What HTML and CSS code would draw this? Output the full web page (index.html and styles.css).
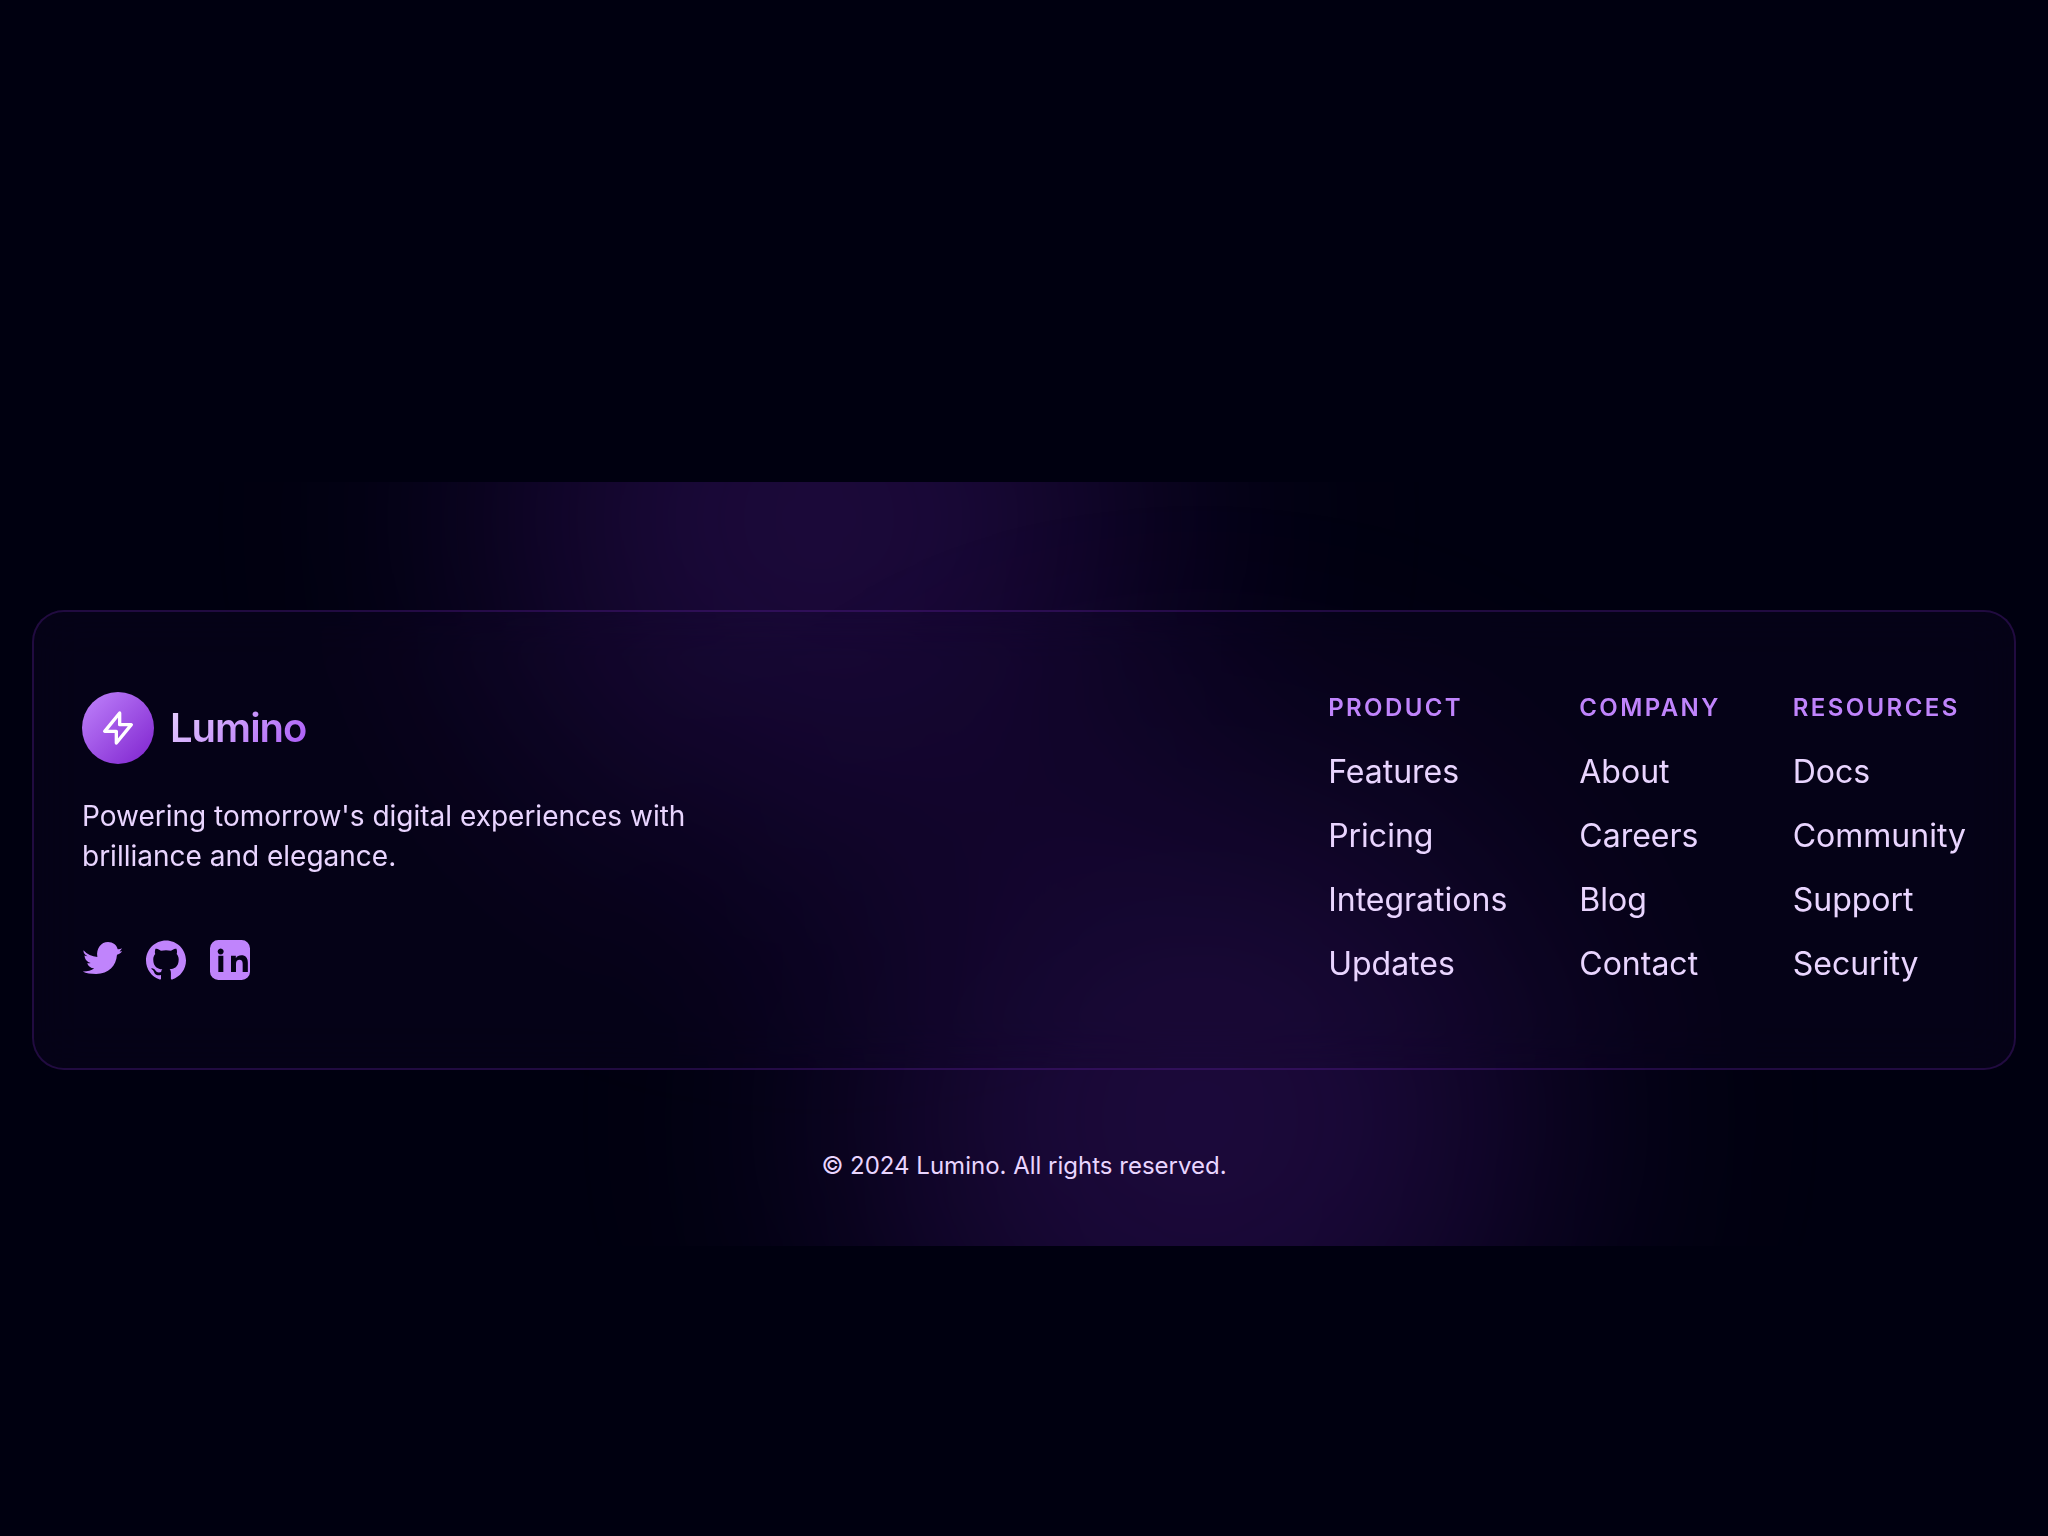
FILE: index.html
```html
<!DOCTYPE html>
<html lang="en">
<head>
<meta charset="utf-8">
<meta name="viewport" content="width=device-width, initial-scale=1">
<title>Lumino</title>
<link rel="stylesheet" href="styles.css">
</head>
<body>
<footer class="footer">
  <div class="glow glow-top"></div>
  <div class="glow glow-bottom"></div>
  <div class="card">
    <div class="brand">
      <div class="logo">
        <span class="logo-mark">
          <svg viewBox="0 0 24 24" width="40" height="40" fill="none" stroke="currentColor" stroke-width="2" stroke-linecap="round" stroke-linejoin="round" aria-hidden="true"><path d="M13 10V3L4 14h7v7l9-11h-7z"/></svg>
        </span>
        <span class="logo-name">Lumino</span>
      </div>
      <p class="tagline">Powering tomorrow's digital experiences with brilliance and elegance.</p>
      <div class="social">
        <a href="#" aria-label="Twitter"><svg viewBox="0 0 24 24" width="40" height="40" fill="currentColor"><path d="M.9 6.200C3 8.600 6 10 9.200 10.200 8.400 5 11.500 1.200 15.600 1.200 18.500 1.200 20.900 3 21.400 5.500 22.300 5.600 23.100 5.400 23.900 5 23.600 5.900 23 6.400 22.500 6.800 23 6.900 23.500 6.800 24 6.600 23.500 7.900 22 8.600 21 8.900 20.500 15.500 16 20.400 8.500 20.400 5.300 20.400 2.500 20 .4 18.900 3 19 5.600 18.400 7.300 17 5.200 16.800 3.700 15.700 3.100 13.900 3.800 14 4.500 14 5.200 13.800 3 13.200 1.600 11.400 1.500 9.300 2.100 9.600 2.800 9.800 3.400 9.800 1.500 8.800 .7 7.600 .9 6.200Z"/></svg></a>
        <a href="#" aria-label="GitHub"><svg viewBox="0 0 24 24" width="40" height="40" fill="currentColor"><path d="M12 .297c-6.63 0-12 5.373-12 12 0 5.303 3.438 9.8 8.205 11.385.6.113.82-.258.82-.577 0-.285-.01-1.04-.015-2.04-3.338.724-4.042-1.61-4.042-1.61C4.422 18.07 3.633 17.7 3.633 17.7c-1.087-.744.084-.729.084-.729 1.205.084 1.838 1.236 1.838 1.236 1.07 1.835 2.809 1.305 3.495.998.108-.776.417-1.305.76-1.605-2.665-.3-5.466-1.332-5.466-5.93 0-1.31.465-2.38 1.235-3.22-.135-.303-.54-1.523.105-3.176 0 0 1.005-.322 3.3 1.23.96-.267 1.98-.399 3-.405 1.02.006 2.04.138 3 .405 2.28-1.552 3.285-1.23 3.285-1.23.645 1.653.24 2.873.12 3.176.765.84 1.23 1.91 1.23 3.22 0 4.61-2.805 5.625-5.475 5.92.42.36.81 1.096.81 2.22 0 1.606-.015 2.896-.015 3.286 0 .315.21.69.825.57C20.565 22.092 24 17.592 24 12.297c0-6.627-5.373-12-12-12"/></svg></a>
        <a href="#" aria-label="LinkedIn"><svg viewBox="0 0 24 24" width="40" height="40" fill="currentColor" fill-rule="evenodd"><path d="M5 0h14a5 5 0 0 1 5 5v14a5 5 0 0 1-5 5H5a5 5 0 0 1-5-5V5a5 5 0 0 1 5-5zM5 9.500v9.700h3V9.500zM6.400 5.100a1.800 1.800 0 1 0 .01 0zM12.600 19.200V9.500h2.900v1.400c.7-1.100 1.900-1.700 3.300-1.700 2.600 0 3.900 1.600 3.900 4.500v5.500h-3.100v-5c0-1.500-.6-2.300-1.900-2.300s-2.100.8-2.100 2.300v5z"/></svg></a>
      </div>
    </div>
    <nav class="links" aria-label="Footer">
      <section>
        <h2>Product</h2>
        <ul><li><a href="#">Features</a></li><li><a href="#">Pricing</a></li><li><a href="#">Integrations</a></li><li><a href="#">Updates</a></li></ul>
      </section>
      <section>
        <h2>Company</h2>
        <ul><li><a href="#">About</a></li><li><a href="#">Careers</a></li><li><a href="#">Blog</a></li><li><a href="#">Contact</a></li></ul>
      </section>
      <section>
        <h2>Resources</h2>
        <ul><li><a href="#">Docs</a></li><li><a href="#">Community</a></li><li><a href="#">Support</a></li><li><a href="#">Security</a></li></ul>
      </section>
    </nav>
  </div>
  <p class="copyright">© 2024 Lumino. All rights reserved.</p>
</footer>
</body>
</html>
```

FILE: styles.css
```css
* {
  box-sizing: border-box;
}

body {
  margin: 0;
  min-height: 100vh;
  padding-top: 192px;
  display: flex;
  flex-direction: column;
  justify-content: center;
  background: #000010;
  color: #e9d5ff;
  font-family: Inter, "Liberation Sans", sans-serif;
}

h2, p, ul {
  margin: 0;
  padding: 0;
}

ul {
  list-style: none;
}

a {
  color: inherit;
  text-decoration: none;
}

svg {
  display: block;
}

.footer {
  position: relative;
  overflow: hidden;
  padding: 128px 32px 64px;
}

.glow {
  position: absolute;
  border-radius: 50%;
  background: rgba(130, 42, 220, 0.21);
  filter: blur(140px);
}

.glow-top {
  top: -284px;
  left: 40%;
  width: 640px;
  height: 640px;
  margin-left: -320px;
}

.glow-bottom {
  right: 25%;
  bottom: -208px;
  width: 672px;
  height: 672px;
}

.card {
  position: relative;
  display: flex;
  flex-wrap: wrap;
  justify-content: space-between;
  gap: 64px;
  padding: 80px 48px;
  border: 2px solid rgba(147, 51, 234, 0.2);
  border-radius: 32px;
  background: rgba(22, 8, 44, 0.24);
  backdrop-filter: blur(24px);
}

.brand {
  max-width: 640px;
}

.logo {
  display: flex;
  align-items: center;
  gap: 16px;
}

.logo-mark {
  display: grid;
  place-items: center;
  width: 72px;
  height: 72px;
  border-radius: 50%;
  background: linear-gradient(135deg, #c084fc, #7e22ce);
  color: #fff;
}

.logo-name {
  font-size: 40px;
  line-height: 56px;
  font-weight: 600;
  letter-spacing: -1px;
  background: linear-gradient(135deg, #e9d5ff, #a855f7);
  background-clip: text;
  color: transparent;
}

.tagline {
  margin-top: 32px;
  font-size: 28px;
  line-height: 40px;
}

.social {
  display: flex;
  gap: 24px;
  margin-top: 64px;
  color: #c084fc;
}

.links {
  display: flex;
  gap: 72px;
}

.links h2 {
  margin-bottom: 24px;
  font-size: 24px;
  line-height: 32px;
  font-weight: 600;
  letter-spacing: 0.1em;
  text-transform: uppercase;
  color: #c084fc;
}

.links ul {
  display: grid;
  gap: 16px;
}

.links li {
  font-size: 32px;
  line-height: 48px;
}

.copyright {
  position: relative;
  margin-top: 80px;
  font-size: 24px;
  line-height: 32px;
  text-align: center;
}
```
